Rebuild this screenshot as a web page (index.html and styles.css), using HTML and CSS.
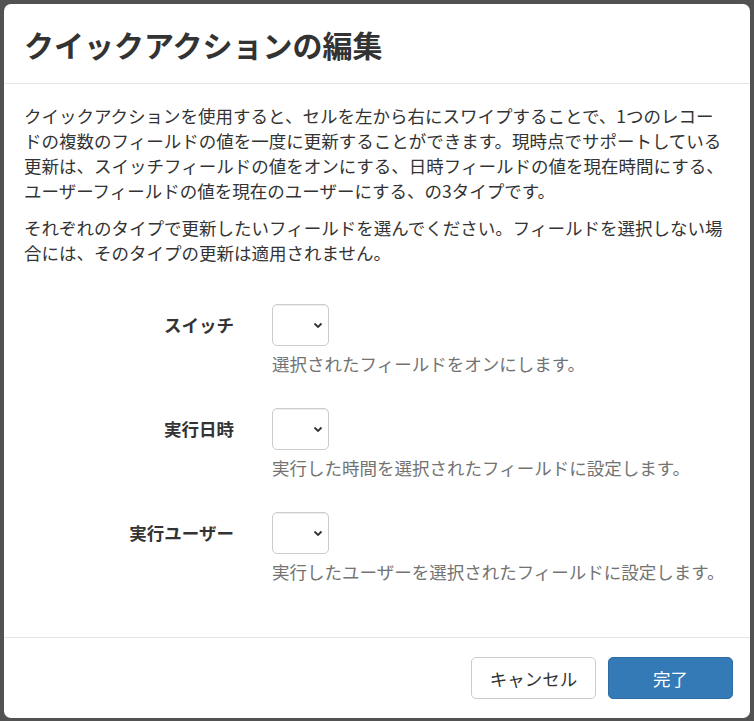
FILE: index.html
```html
<!DOCTYPE html>
<html lang="ja">
<head>
<meta charset="utf-8">
<title>クイックアクションの編集</title>
<link rel="stylesheet" href="styles.css">
</head>
<body>
<div class="backdrop">
  <div class="modal">
    <div class="modal-header">
      <h2 class="modal-title">クイックアクションの編集</h2>
    </div>
    <div class="modal-body">
      <p>クイックアクションを使用すると、セルを左から右にスワイプすることで、1つのレコードの複数のフィールドの値を一度に更新することができます。現時点でサポートしている更新は、スイッチフィールドの値をオンにする、日時フィールドの値を現在時間にする、ユーザーフィールドの値を現在のユーザーにする、の3タイプです。</p>
      <p>それぞれのタイプで更新したいフィールドを選んでください。フィールドを選択しない場合には、そのタイプの更新は適用されません。</p>
      <form class="form">
        <div class="form-group">
          <label class="control-label">スイッチ</label>
          <div class="control">
            <div class="select-wrap">
              <select class="select"><option></option></select>
              <svg class="chev" width="10" height="7" viewBox="0 0 10 7"><path d="M1.5 1.5 L5 5 L8.5 1.5" fill="none" stroke="#333" stroke-width="1.8"/></svg>
            </div>
            <p class="help">選択されたフィールドをオンにします。</p>
          </div>
        </div>
        <div class="form-group">
          <label class="control-label">実行日時</label>
          <div class="control">
            <div class="select-wrap">
              <select class="select"><option></option></select>
              <svg class="chev" width="10" height="7" viewBox="0 0 10 7"><path d="M1.5 1.5 L5 5 L8.5 1.5" fill="none" stroke="#333" stroke-width="1.8"/></svg>
            </div>
            <p class="help">実行した時間を選択されたフィールドに設定します。</p>
          </div>
        </div>
        <div class="form-group">
          <label class="control-label">実行ユーザー</label>
          <div class="control">
            <div class="select-wrap">
              <select class="select"><option></option></select>
              <svg class="chev" width="10" height="7" viewBox="0 0 10 7"><path d="M1.5 1.5 L5 5 L8.5 1.5" fill="none" stroke="#333" stroke-width="1.8"/></svg>
            </div>
            <p class="help">実行したユーザーを選択されたフィールドに設定します。</p>
          </div>
        </div>
      </form>
    </div>
    <div class="modal-footer">
      <button class="btn btn-default" type="button">キャンセル</button>
      <button class="btn btn-primary" type="button">完了</button>
    </div>
  </div>
</div>
</body>
</html>
```
FILE: styles.css
```css
html, body {
  margin: 0;
  padding: 0;
  background: #525252;
}
body {
  font-family: "Noto Sans CJK JP", "Noto Sans", sans-serif;
  color: #333;
}
.backdrop {
  padding: 4px;
  box-sizing: border-box;
  width: 754px;
  height: 721px;
}
.modal {
  background: #fff;
  border-radius: 7px;
  width: 746px;
  height: 714px;
  box-sizing: border-box;
  display: flex;
  flex-direction: column;
  overflow: hidden;
}
.modal-header {
  padding: 19px 20px;
  height: 80px;
  box-sizing: border-box;
  border-bottom: 1px solid #e5e5e5;
}
.modal-title {
  margin: 0;
  font-size: 30px;
  line-height: 42px;
  font-weight: 700;
  color: #333;
}
.modal-body {
  padding: 19px 20px 18px;
  font-size: 17.5px;
  line-height: 25px;
  flex: 1;
}
.modal-body > p {
  margin: 0;
}
.modal-body > p + p {
  margin-top: 12px;
}
.form {
  margin-top: 39px;
}
.form-group {
  display: flex;
  gap: 38px;
  margin-bottom: 32px;
}
.control-label {
  width: 210px;
  text-align: right;
  font-weight: 700;
  padding-top: 8px;
  font-size: 17.5px;
  line-height: 25px;
}
.control {
  display: flex;
  flex-direction: column;
  align-items: flex-start;
}
.select-wrap {
  position: relative;
  width: 57px;
  height: 42px;
}
.select {
  appearance: none;
  -webkit-appearance: none;
  width: 57px;
  height: 42px;
  box-sizing: border-box;
  border: 1px solid #ccc;
  border-radius: 5px;
  background: #fff;
  box-shadow: inset 0 1px 1px rgba(0,0,0,0.075);
  margin: 0;
  font-family: inherit;
}
.chev {
  position: absolute;
  left: 41px;
  top: 18px;
}
.help {
  margin: 5px 0 0;
  color: #737373;
  font-size: 17.5px;
  line-height: 25px;
  white-space: nowrap;
}
.modal-footer {
  border-top: 1px solid #e5e5e5;
  padding: 19px 17px 19px 20px;
  display: flex;
  justify-content: flex-end;
  gap: 12px;
}
.btn {
  width: 125px;
  height: 42px;
  border-radius: 5px;
  font-family: inherit;
  font-size: 17.5px;
  line-height: 23px;
  cursor: pointer;
  padding: 0;
}
.btn-default {
  background: #fff;
  border: 1px solid #ccc;
  color: #333;
}
.btn-primary {
  background: #337ab7;
  border: 1px solid #2e6da4;
  color: #fff;
}
```
